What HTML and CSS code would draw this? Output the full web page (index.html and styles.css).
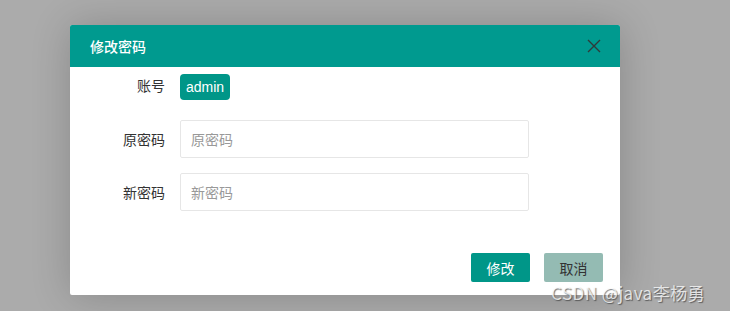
FILE: index.html
```html
<!DOCTYPE html>
<html lang="zh-CN">
<head>
    <meta charset="UTF-8">
    <title>修改密码</title>
    <link rel="stylesheet" href="styles.css">
</head>
<body>
    <div class="layer">
        <div class="layer-title">
            <span>修改密码</span>
            <svg class="close" width="14" height="14" viewBox="0 0 14 14">
                <path d="M1 1L13 13M13 1L1 13" stroke="#2f3a3a" stroke-width="1.4" fill="none"/>
            </svg>
        </div>
        <form class="layer-body">
            <div class="row row-account">
                <label>账号</label>
                <span class="badge">admin</span>
            </div>
            <div class="row">
                <label>原密码</label>
                <input type="password" placeholder="原密码">
            </div>
            <div class="row">
                <label>新密码</label>
                <input type="password" placeholder="新密码">
            </div>
            <div class="actions">
                <button type="button" class="btn btn-primary">修改</button>
                <button type="button" class="btn btn-cancel">取消</button>
            </div>
        </form>
    </div>
    <div class="watermark">CSDN @java李杨勇</div>
</body>
</html>
```
FILE: styles.css
```css
body {
    margin: 0;
    width: 730px;
    height: 311px;
    background: #ababab;
    font-family: "Noto Sans CJK SC", "Liberation Sans", sans-serif;
    font-size: 14px;
    color: #333;
    overflow: hidden;
    position: relative;
}
.layer {
    width: 550px;
    height: 270px;
    margin: 25px 0 0 70px;
    background: #fff;
    border-radius: 2px;
    box-shadow: 1px 1px 40px rgba(0,0,0,.2);
    overflow: hidden;
}
.layer-title {
    height: 42px;
    background: #009a8f;
    color: #fff;
    display: flex;
    align-items: center;
    justify-content: space-between;
    padding: 0 19px 0 20px;
    font-size: 14px;
    font-weight: 500;
}
.close {
    display: block;
}
.layer-body {
    padding: 7px 0 0 0;
}
.row {
    display: flex;
    align-items: center;
    margin-bottom: 15px;
}
.row-account {
    margin-bottom: 20px;
}
.row label {
    width: 95px;
    text-align: right;
    padding-right: 15px;
    color: #333;
}
.row-account label {
    position: relative;
    top: -2px;
}
.badge {
    display: inline-block;
    height: 26px;
    line-height: 26px;
    padding: 0 6px;
    background: #009688;
    color: #fff;
    border-radius: 4px;
    font-family: "Liberation Sans", sans-serif;
    font-size: 14px;
}
input {
    width: 349px;
    height: 38px;
    box-sizing: border-box;
    border: 1px solid #e6e6e6;
    border-radius: 2px;
    padding: 0 10px;
    font-family: "Noto Sans CJK SC", sans-serif;
    font-size: 14px;
}
input::placeholder {
    color: #999;
}
.actions {
    display: flex;
    justify-content: flex-end;
    gap: 14px;
    padding: 27px 17px 0 0;
}
.btn {
    width: 59px;
    height: 29px;
    border: none;
    border-radius: 2px;
    font-family: "Noto Sans CJK SC", sans-serif;
    font-size: 14px;
    cursor: pointer;
}
.btn-primary {
    background: #009688;
    color: #fff;
}
.btn-cancel {
    background: #94bbb3;
    color: #333;
}
.watermark {
    position: absolute;
    left: 551px;
    top: 280px;
    font-size: 17px;
    color: rgba(255,255,255,.75);
    text-shadow: 1px 1px 1px rgba(60,60,60,.7);
    letter-spacing: 0.5px;
}
```
